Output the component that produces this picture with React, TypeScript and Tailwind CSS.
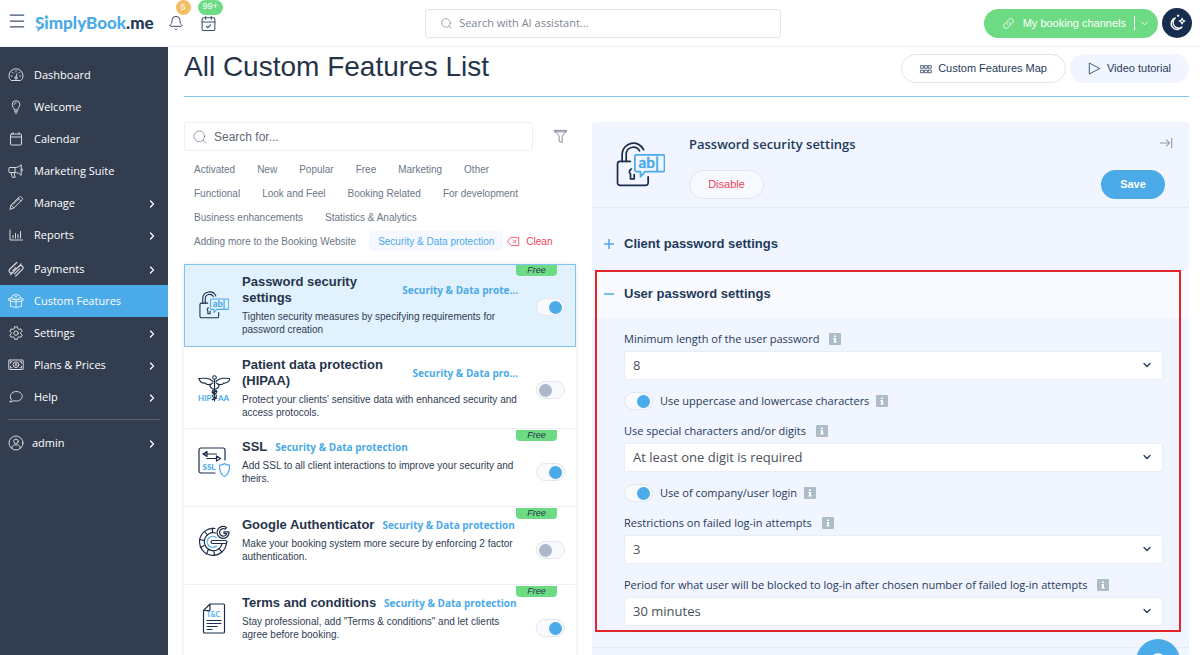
import { useState } from 'react'
import type { ReactNode } from 'react'
import {
  Bell,
  CalendarCheck,
  ChevronDown,
  ChevronRight,
  Menu,
  Search,
} from 'lucide-react'
import clsx from 'clsx'

type NavItem = {
  label: string
  icon: ReactNode
  hasMenu?: boolean
}

type Feature = {
  id: string
  title: string
  category: string
  description: string
  icon: ReactNode
  free: boolean
  enabled: boolean
}

// ---------- small icons ----------

function Line({ children, size = 16, className }: { children: ReactNode; size?: number; className?: string }) {
  return (
    <svg
      width={size}
      height={size}
      viewBox="0 0 16 16"
      fill="none"
      stroke="currentColor"
      strokeWidth="1"
      strokeLinecap="round"
      strokeLinejoin="round"
      className={clsx('shrink-0', className)}
      aria-hidden="true"
    >
      {children}
    </svg>
  )
}

const gaugeIcon = (
  <Line>
    <path d="M3.4 13.5h9.2c1.5-1 2.4-2.7 2.4-4.7a7 7 0 0 0-14 0c0 2 .9 3.700 2.400 4.700z" />
    <path d="M8 4v1M4.500 5.400l.7.7M11.500 5.400l-.7.7M3.200 9h1M11.800 9h1M8.800 7l-.8 3.200" />
    <circle cx="8" cy="11" r="1.200" />
  </Line>
)
const bulbIcon = (
  <Line>
    <path d="M6.200 10.500c0-1.700-2-2.600-2-5a3.800 3.800 0 0 1 7.600 0c0 2.400-2 3.300-2 5z" />
    <path d="M6.400 12.200h3.200M7 14h2M6.200 5.500c0-1 .8-1.800 1.800-1.800" />
  </Line>
)
const calendarIcon = (
  <Line>
    <rect x="2.500" y="3" width="11" height="11" rx="1" />
    <path d="M2.500 6h11M5 1.500V3M11 1.500V3" />
  </Line>
)
const hornIcon = (
  <Line>
    <path d="M1.500 4.500h5.500c2.500 0 4.500-1 6.200-2.800v10.600C11.500 10.500 9.500 9.500 7 9.500H1.500a.6.6 0 0 1-.6-.6V5.100c0-.3.300-.6.600-.6zM7 4.500v5M3 9.500l1.300 4.800h2.900L6 9.500M13.200 5.800c1 0 1.500.4 1.500 1.200s-.5 1.200-1.500 1.200" />
  </Line>
)
const pencilIcon = (
  <Line>
    <path d="M2 14l1-3.800 8.400-8.400c.5-.5 1.200-.5 1.700 0l1.100 1.100c.5.5.5 1.200 0 1.700L5.800 13zM10 3.200L12.800 6M3 10.200L5.800 13M5 9.500l5.500-5.500" />
  </Line>
)
const chartIcon = (
  <Line>
    <path d="M2 3v10h12.500M5 11V8.500M7.500 11V6.500M10 11V7.500M12.500 11V4.500" />
  </Line>
)
const clipIcon = (
  <Line>
    <path d="M8.800 1.500L1.700 8.200a2.200 2.200 0 0 0 3.100 3.200l6.300-6.200a2.300 2.300 0 0 1 3.300 3.200l-6.700 6.800" strokeWidth="1.200" />
    <path d="M5 11.300L2.600 13.700M11.200 5.100l2-2.200M7.800 6.600l-3 3M11.500 7.800l-5 5" strokeWidth="1.200" />
  </Line>
)
const giftIcon = (
  <Line>
    <path d="M2.500 7.500v5.800L8 14.500l5.500-1.200V7.500M8 7v7.500M1 5.500l7 1.500 7-1.500v2.200L8 9.200 1 7.700zM8 6.500C6 6 4 5 4 3.500 4 1.500 7 1.500 8 4.500 9 1.500 12 1.500 12 3.500 12 5 10 6 8 6.500zM3.500 4.500L1.500 5.500M12.500 4.500l2 1M6.500 2L8 1.200 9.500 2" />
  </Line>
)
const gearIcon = (
  <Line>
    <path d="M6.700 1.800h2.600l.5 1.900 1.200.7 1.900-.5 1.300 2.200-1.400 1.400v1.300l1.400 1.300-1.300 2.200-1.900-.5-1.200.7-.5 1.900H6.700l-.5-1.900-1.200-.7-1.900.5-1.300-2.200 1.400-1.300V7.500L1.800 6.100l1.300-2.200 1.900.5 1.200-.7z" />
    <circle cx="8" cy="8.100" r="2.200" />
  </Line>
)
const moneyIcon = (
  <Line>
    <rect x=".8" y="3" width="14.400" height="9.500" rx=".5" />
    <path d="M2.500 6.200V4.700H4M12 4.700h1.500v1.500M13.500 9.300v1.500H12M4 10.800H2.500V9.300" />
    <circle cx="8" cy="7.700" r="2.900" />
    <path d="M9 6.700c-.6-.5-1.900-.4-1.900.3 0 .9 1.900.4 1.900 1.300 0 .8-1.400.8-2 .3" />
  </Line>
)
const bubbleIcon = (
  <Line>
    <path d="M8.300 2.500c3.300 0 5.900 2.100 5.900 4.800s-2.600 4.800-5.900 4.800c-.9 0-1.800-.2-2.500-.5-.9.900-2.300 1.400-4 1.400.9-.7 1.400-1.600 1.500-2.600-.6-.8-.9-1.900-.9-3.100 0-2.700 2.600-4.800 5.900-4.800z" />
  </Line>
)
const userIcon = (
  <Line>
    <circle cx="8" cy="8" r="7" />
    <circle cx="8" cy="6.300" r="2.300" />
    <path d="M3.800 13c.3-2.200 1.600-3 2.600-3h3.200c1 0 2.300.8 2.600 3" />
  </Line>
)

// ---------- feature illustrations ----------

function PasswordArt({ size }: { size: number }) {
  return (
    <svg width={size} height={size} viewBox="0 0 48 48" fill="none" strokeLinecap="round" strokeLinejoin="round" className="shrink-0" aria-hidden="true">
      <g stroke="#1b2f4b" strokeWidth="1.700">
        <path d="M14 21H4a2.500 2.500 0 0 0-2.500 2.500v18.500A2.500 2.500 0 0 0 4 44.500h25a2.500 2.500 0 0 0 2.500-2.500v-6" />
        <path d="M6 21v-7.500a11 11 0 0 1 21-4M10 21v-7a7 7 0 0 1 13-3.500" />
        <path d="M15 28.500c-2.200 1.200-2.500 3.500-.8 4.800V38h3.600v-4" />
      </g>
      <path d="M20 14.500h26a1.500 1.500 0 0 1 1.500 1.500v13.500A1.500 1.500 0 0 1 46 31H28.500L24 36v-5h-4a1.500 1.500 0 0 1-1.500-1.500V16a1.500 1.500 0 0 1 1.500-1.500z" stroke="#4baae8" strokeWidth="1.700" />
      <text x="22" y="27.500" fill="#4baae8" stroke="#4baae8" strokeWidth=".3" fontSize="15" fontFamily="Lato, sans-serif" fontWeight="700">ab|</text>
    </svg>
  )
}

const hipaaArt = (
  <svg width="32" height="32" viewBox="0 0 32 32" fill="none" strokeLinecap="round" className="shrink-0" aria-hidden="true">
    <text x="0" y="29" fill="#4baae8" fontSize="8" fontWeight="700" fontFamily="Lato, sans-serif">HIP</text>
    <text x="20" y="29" fill="#4baae8" fontSize="8" fontWeight="700" fontFamily="Lato, sans-serif">AA</text>
    <g stroke="#1b2f4b" strokeWidth="1.100">
      <circle cx="16.500" cy="5.500" r="1.800" />
      <path d="M16.500 7.500V29M15 9.500C11 5.500 6 6 .8 6.500c1 3 3.500 4.800 6.500 4.600 1 2 5 2.200 7.700-.3M18 9.500c4-4 9-3.500 14.200-3-1 3-3.500 4.800-6.500 4.600-1 2-5 2.200-7.700-.3" />
      <path d="M13 12c-2.500 2 0 4.500 3.500 5.500 3.500 1.500 3 3.500 0 4.500-3 1-2.500 3 0 3.700M20 12c2.500 2 0 4.500-3.500 5.500-3.500 1.500-3 3.500 0 4.500 3 1 2.500 3 0 3.700" />
      <path d="M14.500 27.500l4-1.500M14.500 20.500l4-1.500" strokeWidth="1.600" />
    </g>
  </svg>
)

const sslArt = (
  <svg width="32" height="32" viewBox="0 0 32 32" fill="none" strokeLinecap="round" strokeLinejoin="round" className="shrink-0" aria-hidden="true">
    <g stroke="#1b2f4b" strokeWidth="1.200">
      <path d="M17 27H3a2 2 0 0 1-2-2V4a2 2 0 0 1 2-2h22a2 2 0 0 1 2 2v10" />
      <path d="M9 8h9.500M9 8L5 8l4-2.500v5L5 8M9 12.500h9.500M22.500 12.500l-4-2.500v5z" />
    </g>
    <text x="4.500" y="24" fill="#4baae8" fontSize="8" fontWeight="900" fontFamily="Lato, sans-serif">SSL</text>
    <path d="M26.500 17.500c1.500 1.300 3.300 1.700 5 1.500.2 6-1.200 9.500-5 11.500-3.800-2-5.200-5.500-5-11.500 1.700.2 3.500-.2 5-1.500z" stroke="#4baae8" strokeWidth="1.200" />
  </svg>
)

const googleArt = (
  <svg width="32" height="32" viewBox="0 0 32 32" fill="none" stroke="#1b2f4b" strokeWidth="1.200" strokeLinecap="round" strokeLinejoin="round" className="shrink-0" aria-hidden="true">
    <path d="M17 4.500A13.500 13.500 0 1 0 28.500 18.500" />
    <path d="M17.500 9A9 9 0 1 0 24 19.800" />
    <path d="M18 13.500a5.500 5.500 0 1 0 .3 8.500" stroke="#4baae8" />
    <path d="M14.500 16.500h13a1.500 1.500 0 0 1 0 3h-13a1.500 1.500 0 0 1 0-3z" />
    <path d="M14.500 4.200v4M7 8l2.300 3M1.500 15.500l4 .8M2.500 23.500l3.500-2M8.500 30l1.500-3.600M16.500 31.200l-.7-4M23.500 27.600l-2.400-3" />
    <path d="M28.500 3.500A6 6 0 1 0 31 7.800h-5v1.700h2.800a3.700 3.700 0 1 1-1.700-4.300z" />
  </svg>
)

const termsArt = (
  <svg width="32" height="32" viewBox="0 0 32 32" fill="none" stroke="#1b2f4b" strokeWidth="1.200" strokeLinecap="round" strokeLinejoin="round" className="shrink-0" aria-hidden="true">
    <path d="M12 2h13.500a1 1 0 0 1 1 1v27a1 1 0 0 1-1 1H6.500a1 1 0 0 1-1-1V8.500zM12 2v5.500a1 1 0 0 1-1 1H5.500" />
    <path d="M9 18.500h14M9 21.500h14M9 24.500h10M9 27.500h5" />
    <text x="8.500" y="15" fill="#4baae8" stroke="none" fontSize="7" fontWeight="700" fontFamily="Lato, sans-serif">T&amp;C</text>
  </svg>
)

// ---------- data ----------

const NAV_TOP: NavItem[] = [
  { label: 'Dashboard', icon: gaugeIcon },
  { label: 'Welcome', icon: bulbIcon },
  { label: 'Calendar', icon: calendarIcon },
  { label: 'Marketing Suite', icon: hornIcon },
  { label: 'Manage', icon: pencilIcon, hasMenu: true },
  { label: 'Reports', icon: chartIcon, hasMenu: true },
]

const NAV_BOTTOM: NavItem[] = [
  { label: 'Payments', icon: clipIcon, hasMenu: true },
  { label: 'Custom Features', icon: giftIcon },
  { label: 'Settings', icon: gearIcon, hasMenu: true },
  { label: 'Plans & Prices', icon: moneyIcon, hasMenu: true },
  { label: 'Help', icon: bubbleIcon, hasMenu: true },
]

const FILTER_ROWS = [
  ['Activated', 'New', 'Popular', 'Free', 'Marketing', 'Other'],
  ['Functional', 'Look and Feel', 'Booking Related', 'For development'],
  ['Business enhancements', 'Statistics & Analytics'],
  ['Adding more to the Booking Website', 'Security & Data protection'],
]

const FEATURES: Feature[] = [
  {
    id: 'password',
    title: 'Password security settings',
    category: 'Security & Data prote...',
    description: 'Tighten security measures by specifying requirements for password creation',
    icon: <PasswordArt size={30} />,
    free: true,
    enabled: true,
  },
  {
    id: 'hipaa',
    title: 'Patient data protection (HIPAA)',
    category: 'Security & Data pro...',
    description: "Protect your clients' sensitive data with enhanced security and access protocols.",
    icon: hipaaArt,
    free: false,
    enabled: false,
  },
  {
    id: 'ssl',
    title: 'SSL',
    category: 'Security & Data protection',
    description: 'Add SSL to all client interactions to improve your security and theirs.',
    icon: sslArt,
    free: true,
    enabled: true,
  },
  {
    id: 'google',
    title: 'Google Authenticator',
    category: 'Security & Data protection',
    description: 'Make your booking system more secure by enforcing 2 factor authentication.',
    icon: googleArt,
    free: true,
    enabled: false,
  },
  {
    id: 'terms',
    title: 'Terms and conditions',
    category: 'Security & Data protection',
    description: 'Stay professional, add "Terms & conditions" and let clients agree before booking.',
    icon: termsArt,
    free: true,
    enabled: true,
  },
]

// ---------- controls ----------

function Toggle({ id, label, initial }: { id: string; label?: string; initial: boolean }) {
  const [on, setOn] = useState(initial)
  return (
    <input
      id={id}
      type="checkbox"
      aria-label={label}
      checked={on}
      onChange={(e) => setOn(e.target.checked)}
      className="flex h-[18px] w-[29px] shrink-0 cursor-pointer appearance-none items-center rounded-full border border-[#e3e6ee] bg-[#f9fafe] px-0.5 before:size-[13px] before:rounded-full before:bg-[#adb9c8] checked:justify-end checked:before:bg-[#4baae8]"
    />
  )
}

function InfoMark() {
  return (
    <svg width="12" height="12" viewBox="0 0 12 12" className="shrink-0" role="img" aria-label="More info">
      <rect width="12" height="12" rx="1" fill="#aebbc9" />
      <path d="M5 2.500h2v1.600H5zM4.300 5H7v3.400h.8v1.100H4.300V8.400H5V6.100h-.7z" fill="#fff" />
    </svg>
  )
}

function SelectField({ id, label, options }: { id: string; label: string; options: string[] }) {
  return (
    <div className="mb-[13px]">
      <div className="mb-1 flex h-4 items-center gap-2.5">
        <label htmlFor={id} className="text-[11px] leading-4 whitespace-nowrap">{label}</label>
        <InfoMark />
      </div>
      <div className="relative">
        <select
          id={id}
          className="block h-[29px] w-full appearance-none rounded-[3px] border border-[#e8edf8] bg-white px-2 text-[13px] text-[#495057]"
        >
          {options.map((o) => (
            <option key={o}>{o}</option>
          ))}
        </select>
        <ChevronDown size={12} strokeWidth={2.5} className="pointer-events-none absolute top-2 right-2.5" />
      </div>
    </div>
  )
}

function ToggleField({ id, label }: { id: string; label: string }) {
  return (
    <div className="mb-[13px] flex items-center gap-[7px]">
      <Toggle id={id} initial />
      <label htmlFor={id} className="text-[11px] leading-4">{label}</label>
      <InfoMark />
    </div>
  )
}

// ---------- layout parts ----------

function TopBar() {
  return (
    <header className="flex h-[47px] shrink-0 items-center border-b border-[#eef0f8] bg-white pr-2 pl-[7px]">
      <button type="button" aria-label="Menu" className="mr-2 pb-1 text-[#3c5270]">
        <Menu size={20} strokeWidth={1.5} />
      </button>
      <a href="#" className="relative flex items-center font-['Lato',sans-serif] text-[17px] leading-6 font-black text-[#24385a]">
        <span className="text-[#4baae8]">SimplyBook</span>.me
        <svg width="13" height="18" viewBox="0 0 13 18" className="absolute top-1 left-0" aria-hidden="true">
          <path d="M1 13.500L9 5.500" stroke="#fff" strokeWidth="1" />
          <path d="M2.500 16l5-5M10 2l2-1.500" stroke="#4baae8" strokeWidth="1.500" />
        </svg>
      </a>
      <div className="ml-3.5 flex items-center gap-4 text-[#3c5270]">
        <button type="button" aria-label="Notifications" className="relative">
          <Bell size={16} strokeWidth={1.5} />
          <span className="absolute -top-[15px] left-2 flex size-[15px] items-center justify-center rounded-full bg-[#f3bd63] text-[9px] text-white">5</span>
        </button>
        <button type="button" aria-label="Tasks" className="relative">
          <CalendarCheck size={17} strokeWidth={1.5} />
          <span className="absolute -top-[15px] -left-0.5 flex h-[15px] w-[25px] items-center justify-center rounded-full bg-[#6ddb84] text-[9px] text-white">99+</span>
        </button>
      </div>

      <div className="flex flex-1 justify-center pl-1.5">
        <div className="flex h-[29px] w-[356px] items-center gap-1.5 rounded-[3px] border border-[#e2e4e8] px-3.5 text-[#8c97a6]">
          <Search size={13} strokeWidth={1.5} />
          <input
            type="text"
            aria-label="Search with AI assistant"
            placeholder="Search with AI assistant..."
            className="min-w-0 flex-1 font-['Open_Sans',sans-serif] text-[11px] outline-none placeholder:text-[#7d8795]"
          />
        </div>
      </div>

      <button type="button" className="flex h-[29px] items-center rounded-full bg-[#6ddb84] pr-2 pl-[18px] text-[11px] text-white">
        <Line size={13} className="mr-2">
          <path d="M6.500 9.500a3 3 0 0 1 0-4.200l2.800-2.800a3 3 0 0 1 4.200 4.200l-2 2M9.500 6.500a3 3 0 0 1 0 4.200l-2.800 2.800a3 3 0 0 1-4.200-4.200l2-2" />
        </Line>
        My booking channels
        <span className="ml-2 h-3.5 border-l border-white" />
        <ChevronDown size={11} strokeWidth={2} className="ml-1" />
      </button>
      <button type="button" aria-label="Dark mode" className="ml-1 flex size-[30px] items-center justify-center rounded-full bg-[#172d4d] text-white">
        <Line size={18}>
          <path d="M6.500 3.500A5.300 5.300 0 1 0 12.500 11.500 5 5 0 0 1 6.500 3.500z" strokeWidth="1.200" />
          <path d="M12.500 3.800l.8 1.700 1.700.8-1.700.8-.8 1.700-.8-1.700-1.700-.8 1.700-.8z" />
          <path d="M9 .8v1.400M8.300 1.500h1.400" />
        </Line>
      </button>
    </header>
  )
}

function NavLink({ item }: { item: NavItem }) {
  const active = item.label === 'Custom Features'
  return (
    <li>
      <a
        href="#"
        aria-current={active ? 'page' : undefined}
        className={clsx('flex h-8 items-center pr-2.5 pl-2 text-[11px] text-white', active && 'bg-[#4baae8]')}
      >
        <span className="opacity-80">{item.icon}</span>
        <span className="ml-2.5 flex-1">{item.label}</span>
        {item.hasMenu && <ChevronRight size={12} strokeWidth={2.5} className="mt-0.5" />}
      </a>
    </li>
  )
}

function Sidebar() {
  return (
    <nav className="w-[168px] shrink-0 bg-[#333d50] pt-3 font-['Open_Sans',sans-serif]">
      <ul>
        {NAV_TOP.map((item) => (
          <NavLink key={item.label} item={item} />
        ))}
      </ul>
      <ul className="mt-0.5">
        {NAV_BOTTOM.map((item) => (
          <NavLink key={item.label} item={item} />
        ))}
      </ul>
      <hr className="mx-2 mt-1.5 mb-[7px] border-[#56606f]" />
      <a href="#" className="flex h-8 items-center pr-2.5 pl-2 text-[11px] text-white">
        <span className="opacity-80">{userIcon}</span>
        <span className="ml-2 flex-1">admin</span>
        <ChevronRight size={12} strokeWidth={2.5} className="mt-0.5" />
      </a>
    </nav>
  )
}

function Filters() {
  const [selected, setSelected] = useState('Security & Data protection')
  return (
    <div className="mt-2 flex flex-col gap-1 text-[10px] text-[#6b7788]">
      {FILTER_ROWS.map((row, i) => (
        <div key={i} className="flex gap-1">
          {row.map((name) => (
            <button
              key={name}
              type="button"
              onClick={() => setSelected(name)}
              className={clsx('h-5 rounded px-[9px] whitespace-nowrap first:pl-2.5', name === selected && 'bg-[#f5f8ff] text-[#4baae8]')}
            >
              {name}
            </button>
          ))}
          {i === FILTER_ROWS.length - 1 && (
            <button type="button" onClick={() => setSelected('')} className="flex items-center gap-1.5 text-[#f2415c]">
              <Line size={13}>
                <path d="M5 3h9.500v10H5L1 8zM7.500 6l4 4M11.500 6l-4 4" />
              </Line>
              Clean
            </button>
          )}
        </div>
      ))}
    </div>
  )
}

function FeatureRow({ feature, active }: { feature: Feature; active: boolean }) {
  return (
    <li
      className={clsx(
        'relative flex items-start border py-[9px] pr-2.5 pl-[13px]',
        active ? 'min-h-[83px] border-[#7fc3ee] bg-[#e1f1fd]' : 'min-h-[78px] border-transparent border-b-[#eef0f8] bg-white',
      )}
    >
      <div className="flex min-w-0 flex-1 items-center">
        <div className="flex w-8 shrink-0 justify-center">{feature.icon}</div>
        <div className="ml-3 w-[278px]">
          <div className="flex items-center gap-2">
            <h3 className={clsx('text-[13px] leading-4 font-bold text-[#26344a]', feature.title.length > 20 ? 'flex-1' : 'shrink-0')}>
              {feature.title}
            </h3>
            <a href="#" className="shrink-0 pr-0.5 font-['Open_Sans',sans-serif] text-[10px] leading-4 font-bold text-[#4baae8]">
              {feature.category}
            </a>
          </div>
          <p className="mt-1 text-[10px] leading-[13px] text-[#2f3d52]">{feature.description}</p>
        </div>
      </div>
      <div className="mt-6">
        <Toggle id={feature.id} label={feature.title} initial={feature.enabled} />
      </div>
      {feature.free && (
        <span className="absolute top-0 right-[18px] h-[11px] w-[41px] rounded-b bg-[#6ddb84] text-center text-[9px] leading-[11px] text-[#26344a] italic">
          Free
        </span>
      )}
    </li>
  )
}

function FeatureList() {
  return (
    <section>
      <div className="flex items-center">
        <div className="flex h-[29px] flex-1 items-center gap-1.5 rounded-[3px] border border-[#eceefa] px-[7px] text-[#7d8795]">
          <Search size={16} strokeWidth={1.2} />
          <input
            type="text"
            aria-label="Search features"
            placeholder="Search for..."
            className="min-w-0 flex-1 text-xs outline-none placeholder:text-[#5f6874]"
          />
        </div>
        <button type="button" aria-label="Filter" className="mr-2 ml-5 text-[#7d8795]">
          <Line size={15}>
            <path d="M1.500 1.500h13L9.800 7.800v6.700L6.500 13V7.800zM1.500 3h13" />
          </Line>
        </button>
      </div>
      <Filters />
      <ul className="mt-[13px] shadow-[0_0_4px_rgba(60,80,130,0.14)]">
        {FEATURES.map((f) => (
          <FeatureRow key={f.id} feature={f} active={f.id === 'password'} />
        ))}
      </ul>
    </section>
  )
}

function SettingsPanel() {
  return (
    <section className="rounded-t bg-[#f0f5ff] text-[#1f3a5a]">
      <div className="flex border-b border-[#e6ebf7] pt-3.5 pr-4 pb-2 pl-6">
        <div className="mt-1">
          <PasswordArt size={49} />
        </div>
        <div className="ml-6 flex-1">
          <h2 className="font-['Open_Sans',sans-serif] text-[13px] leading-4 font-semibold">Password security settings</h2>
          <button type="button" className="mt-[18px] h-[29px] w-[75px] rounded-full border border-[#e0e4ec] bg-[#f7f9fe] text-[11px] text-[#f2415c]">
            Disable
          </button>
        </div>
        <div className="flex flex-col items-end">
          <button type="button" aria-label="Collapse panel" className="text-[#8c97a6]">
            <Line size={14}>
              <path d="M1.500 8h10.500M8.500 4.500L12 8l-3.500 3.500M14.500 2.500v11" strokeWidth="1.200" />
            </Line>
          </button>
          <button type="button" className="mt-5 mr-2 h-[29px] w-16 rounded-full bg-[#4baae8] text-[11px] font-bold text-white">
            Save
          </button>
        </div>
      </div>

      <button type="button" className="flex h-[62px] w-full items-center gap-2.5 pt-2.5 pl-3 text-[13px] font-bold">
        <svg width="10" height="10" viewBox="0 0 10 10" stroke="#4baae8" strokeWidth="1.500" aria-hidden="true">
          <path d="M0 5h10M5 0v10" />
        </svg>
        Client password settings
      </button>

      <div className="relative">
        <button type="button" className="flex h-12 w-full items-center gap-2.5 bg-[#f8faff] pl-3 text-[13px] font-bold">
          <svg width="10" height="10" viewBox="0 0 10 10" stroke="#4baae8" strokeWidth="1.500" aria-hidden="true">
            <path d="M0 5h10" />
          </svg>
          User password settings
        </button>
        <div className="border-b border-[#e6ebf7] px-8 pt-[13px] pr-[26px] pb-2 font-['Open_Sans',sans-serif]">
          <SelectField id="min-length" label="Minimum length of the user password" options={['8', '10', '12']} />
          <div className="-mt-px">
            <ToggleField id="mixed-case" label="Use uppercase and lowercase characters" />
          </div>
          <SelectField id="special" label="Use special characters and/or digits" options={['At least one digit is required', 'Not required']} />
          <div className="-mt-px">
            <ToggleField id="company-login" label="Use of company/user login" />
          </div>
          <SelectField id="attempts" label="Restrictions on failed log-in attempts" options={['3', '5', '10']} />
          <SelectField
            id="block-period"
            label="Period for what user will be blocked to log-in after chosen number of failed log-in attempts"
            options={['30 minutes', '1 hour']}
          />
        </div>
        <div className="pointer-events-none absolute top-0 right-2 bottom-4 left-[3px] border-2 border-[#e0262b]" />
      </div>
      <div className="h-10" />
    </section>
  )
}

export default function App() {
  return (
    <div className="flex h-screen flex-col overflow-hidden bg-white font-['Liberation_Sans',Arial,sans-serif]">
      <TopBar />
      <div className="flex min-h-0 flex-1">
        <Sidebar />
        <main className="min-w-0 flex-1 overflow-hidden pr-[11px] pl-4">
          <div className="flex h-[50px] items-start border-b border-[#7cc6f0]">
            <h1 className="flex-1 pt-1 text-[28px] leading-8 text-[#26344a]">All Custom Features List</h1>
            <div className="mt-[7px] flex gap-1 text-[11px] text-[#1f3a5a]">
              <button type="button" className="flex h-[29px] items-center gap-1.5 rounded-full border border-[#dfe3ea] px-[18px]">
                <Line size={12}>
                  <path d="M1 3.500h3.500v3.500H1zM6.300 3.500h3.500v3.500H6.300zM11.500 3.500H15v3.500h-3.500zM1 9.500h3.500V13H1zM6.300 9.500h3.500V13H6.300zM11.500 9.500H15V13h-3.500z" />
                </Line>
                Custom Features Map
              </button>
              <button type="button" className="flex h-[29px] items-center gap-1.5 rounded-full bg-[#f0f5ff] px-[18px]">
                <Line size={13}>
                  <path d="M2 1.500l12.500 6.500L2 14.500z" />
                </Line>
                Video tutorial
              </button>
            </div>
          </div>
          <div className="mt-[25px] grid grid-cols-[392fr_597fr] gap-4">
            <FeatureList />
            <SettingsPanel />
          </div>
        </main>
      </div>
      <button type="button" aria-label="Open chat" className="fixed right-5 -bottom-7 flex size-11 justify-center rounded-full bg-[#4baae8] pt-3.5 text-white">
        <svg width="16" height="16" viewBox="0 0 16 16" fill="none" stroke="currentColor" strokeWidth="1.500" aria-hidden="true">
          <circle cx="8" cy="8" r="7" />
        </svg>
      </button>
    </div>
  )
}
